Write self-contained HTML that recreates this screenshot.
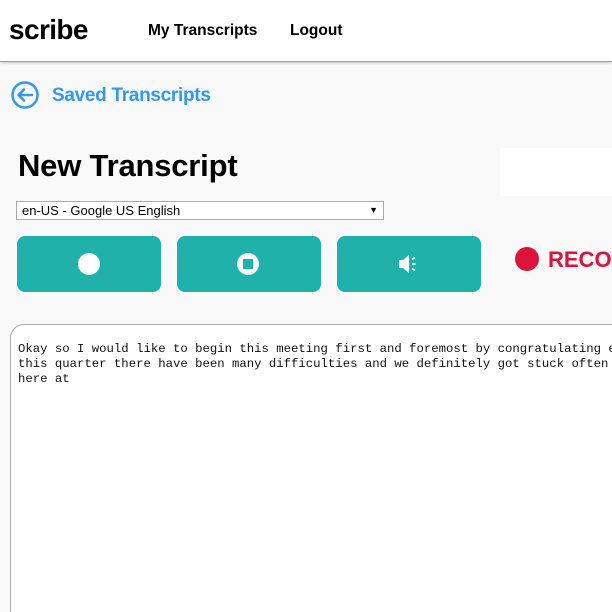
<!DOCTYPE html>
<html><head><style>
html,body{margin:0;width:612px;height:612px;overflow:hidden}
body{background:#f9f9f9;font-family:"Liberation Sans",sans-serif;position:relative}
.hdr{position:absolute;left:0;top:0;width:612px;height:61px;background:#fff;border-bottom:1px solid #7aa;box-shadow:0 1px 3px rgba(0,0,0,.2)}
.logo{position:absolute;left:9px;top:14px;font-size:28px;font-weight:bold;letter-spacing:-0.6px;color:#000}
.nav{position:absolute;top:22px;font-size:15.5px;font-weight:bold;color:#000}
.back{position:absolute;left:52px;top:85px;font-size:19px;font-weight:bold;color:#3399ee;letter-spacing:-0.3px}
h1{position:absolute;left:18px;top:148px;margin:0;font-size:31px;font-weight:bold;color:#000;letter-spacing:-0.2px}
.white{position:absolute;left:500px;top:148px;width:112px;height:48px;background:#fff}
.sel{position:absolute;left:16px;top:201px;width:366px;height:17px;border:1px solid #aaa;background:#fff;font-size:13px;line-height:17px}
.sel span{position:absolute;left:5px;top:0}
.sel i{position:absolute;right:5px;top:0;font-style:normal;font-size:9px}
.btn{position:absolute;top:236px;width:144px;height:56px;background:#20b2aa;border-radius:8px}
.rec{position:absolute;left:548px;top:247px;font-size:22px;font-weight:bold;color:#dc143c;width:64px;overflow:hidden;white-space:nowrap}
.dot{position:absolute;left:515px;top:247px;width:24px;height:24px;border-radius:50%;background:#dc143c}
.ta{position:absolute;left:10px;top:324px;width:601px;height:288px;background:#fff;border:1px solid #aaa;border-right:none;border-bottom:none;border-radius:14px 0 0 0}
.txt{position:absolute;left:18px;top:342px;font-family:"Liberation Mono",monospace;font-size:12.3px;line-height:15px;white-space:pre;color:#111;width:594px;overflow:hidden}
</style></head><body>
<div class="hdr">
<div class="logo">scribe</div>
<div class="nav" style="left:148px">My Transcripts</div>
<div class="nav" style="left:290px">Logout</div>
</div>
<svg style="position:absolute;left:11px;top:81px" width="28" height="28" viewBox="0 0 28 28"><circle cx="14" cy="14" r="12.5" fill="none" stroke="#3399ee" stroke-width="2.5"/><path d="M21 14H8M13 8.5L7.5 14L13 19.5" fill="none" stroke="#3399ee" stroke-width="2.5" stroke-linecap="round" stroke-linejoin="round"/></svg>
<div class="back">Saved Transcripts</div>
<h1>New Transcript</h1>
<div class="white"></div>
<div class="sel"><span>en-US - Google US English</span><i>▼</i></div>
<div class="btn" style="left:17px"><div style="position:absolute;left:61px;top:17px;width:22px;height:22px;border-radius:50%;background:#fff"></div></div>
<div class="btn" style="left:177px"><div style="position:absolute;left:60px;top:17px;width:22px;height:22px;border-radius:50%;background:#fff"></div><div style="position:absolute;left:66px;top:23px;width:10px;height:10px;background:#20b2aa"></div></div>
<div class="btn" style="left:337px"><svg style="position:absolute;left:61px;top:17px" width="24" height="22" viewBox="0 0 24 22"><path d="M1 7h4l6-5v18l-6-5H1z" fill="#fff"/><path d="M14 6l3-1M14 11h3.5M14 16l3 1" stroke="#fff" stroke-width="1.8"/></svg></div>
<div class="dot"></div>
<div class="rec">RECORDING</div>
<div class="ta"></div>
<div class="txt">Okay so I would like to begin this meeting first and foremost by congratulating everyone
this quarter there have been many difficulties and we definitely got stuck often
here at</div>
</body></html>
